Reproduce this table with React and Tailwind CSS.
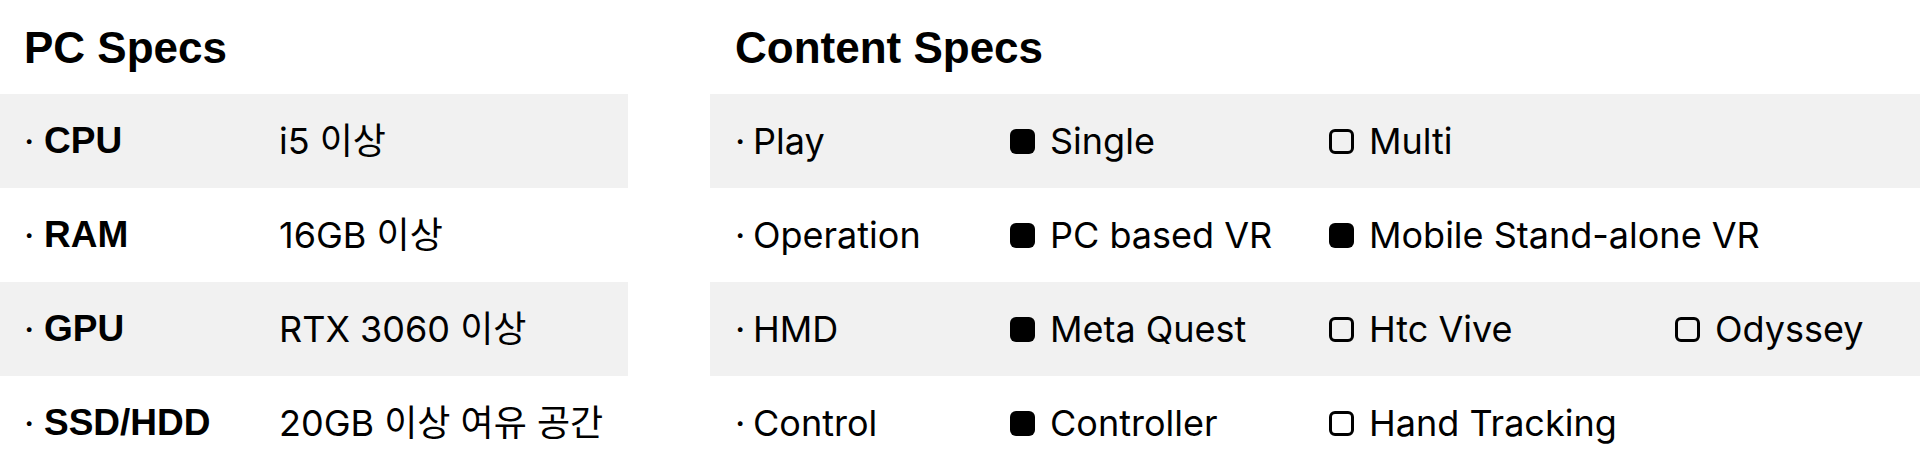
const pcSpecs = [
  { label: "CPU", value: "i5 이상" },
  { label: "RAM", value: "16GB 이상" },
  { label: "GPU", value: "RTX 3060 이상" },
  { label: "SSD/HDD", value: "20GB 이상 여유 공간" },
];

const contentSpecs = [
  { label: "Play", options: [["Single", true], ["Multi", false]] },
  { label: "Operation", options: [["PC based VR", true], ["Mobile Stand-alone VR", true]] },
  { label: "HMD", options: [["Meta Quest", true], ["Htc Vive", false], ["Odyssey", false]] },
  { label: "Control", options: [["Controller", true], ["Hand Tracking", false]] },
];

const optionWidths = ["w-[319px]", "w-[346px]", "w-[245px]"];

function Box({ checked }) {
  return checked ? (
    <span className="inline-block w-[25px] h-[25px] rounded-[6px] bg-black shrink-0" />
  ) : (
    <span className="inline-block w-[25px] h-[25px] rounded-[6px] border-[3px] border-black shrink-0" />
  );
}

export default function App() {
  return (
    <div
      className="w-[1920px] h-[469px] overflow-hidden bg-white text-black flex"
      style={{ fontFamily: "Inter, 'Noto Sans CJK KR', sans-serif" }}
    >
      {/* PC Specs */}
      <div className="w-[628px] shrink-0">
        <h2 className="h-[94px] flex items-center pl-[24px] pt-[2px] text-[44px] font-bold font-['Liberation_Sans',sans-serif]">
          PC Specs
        </h2>
        {pcSpecs.map((row, i) => (
          <div
            key={row.label}
            className={`h-[94px] flex items-center pl-[24px] text-[36px] whitespace-nowrap ${i % 2 === 0 ? "bg-[#f1f1f1]" : "bg-white"}`}
          >
            <span className="w-[255px] flex items-center">
              <span className="w-[20px]">·</span>
              <span className="font-bold text-[37px] font-['Liberation_Sans',sans-serif]">{row.label}</span>
            </span>
            <span>{row.value}</span>
          </div>
        ))}
      </div>

      {/* Content Specs */}
      <div className="ml-[82px] flex-1">
        <h2 className="h-[94px] flex items-center pl-[25px] pt-[2px] text-[44px] font-bold font-['Liberation_Sans',sans-serif]">
          Content Specs
        </h2>
        {contentSpecs.map((row, i) => (
          <div
            key={row.label}
            className={`h-[94px] flex items-center pl-[25px] text-[36px] whitespace-nowrap ${i % 2 === 0 ? "bg-[#f1f1f1]" : "bg-white"}`}
          >
            <span className="w-[275px] flex items-center">
              <span className="w-[18px]">·</span>
              {row.label}
            </span>
            {row.options.map(([name, checked], j) => (
              <span key={name} className={`${optionWidths[j]} shrink-0 flex items-center gap-[15px]`}>
                <Box checked={checked} />
                {name}
              </span>
            ))}
          </div>
        ))}
      </div>
    </div>
  );
}
